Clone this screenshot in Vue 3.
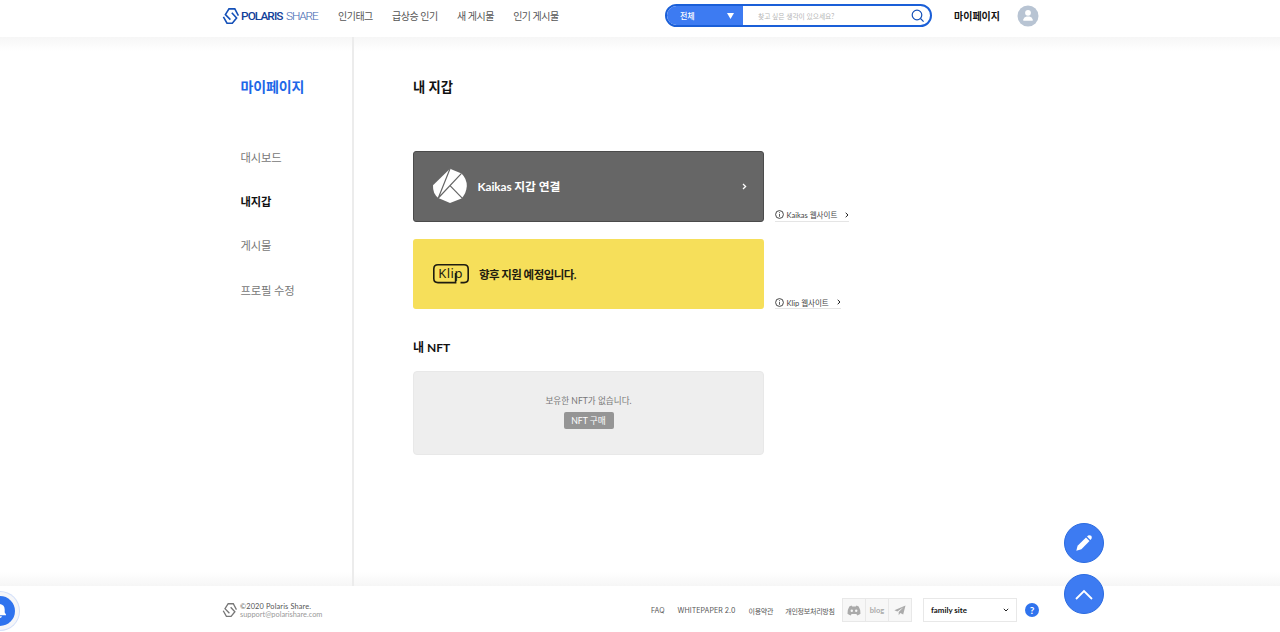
<template>
    <div class="page">
        <header class="header">
            <a class="logo">
                <svg width="18" height="20" viewBox="0 0 18 20" fill="none" stroke="#1450b8" stroke-width="1.6">
                    <path d="M16.4 9.6 L12.8 2.9 H7 L3.4 8.6 L8.4 13.6" />
                    <path d="M1.4 10.8 L5 17.2 H10.3 L14.6 12 L9.8 6.8" />
                </svg>
                <span class="polaris">POLARIS</span>
                <span class="share">SHARE</span>
            </a>
            <nav class="nav">
                <a v-for="item in navItems" :key="item">{{ item }}</a>
            </nav>
            <div class="search">
                <div class="search-type">
                    <span>전체</span>
                    <svg width="7" height="6" viewBox="0 0 7 6"><path d="M0 0 H7 L3.5 6 Z" fill="#fff" /></svg>
                </div>
                <div class="search-input">
                    <span>찾고 싶은 생각이 있으세요?</span>
                    <svg width="14" height="14" viewBox="0 0 14 14" fill="none" stroke="#1450b8" stroke-width="1.2">
                        <circle cx="6" cy="6" r="4.8" />
                        <path d="M9.5 9.5 L12.6 12.6" />
                    </svg>
                </div>
            </div>
            <a class="mypage">마이페이지</a>
            <svg class="avatar" width="22" height="22" viewBox="0 0 22 22">
                <circle cx="11" cy="11" r="10.5" fill="#b8c4d3" />
                <circle cx="11" cy="7.8" r="2.9" fill="#fff" />
                <path d="M6.3 15.8 V14.5 Q6.8 11.8 9.6 11.5 H12.4 Q15.2 11.8 15.7 14.5 V15.8 Z" fill="#fff" />
            </svg>
        </header>

        <div class="body">
            <aside class="sidebar">
                <h2>마이페이지</h2>
                <ul>
                    <li v-for="menu in menus" :key="menu" :class="{ active: menu === current }">{{ menu }}</li>
                </ul>
            </aside>

            <main class="content">
                <h1>내 지갑</h1>
                <div class="row">
                    <div class="wallet kaikas">
                        <svg width="36" height="36" viewBox="0 0 36 36">
                            <path d="M18 .8 L29.5 5.4 Q34.8 10.5 34.8 18 Q34.5 25 29.5 30.4 L18 35 L6.3 30 Q.6 25.5 1 17.2 Z" fill="#fff" />
                            <path d="M18 .8 L6.3 30 L29.5 5.4 M18 17.7 L30.2 30.2" fill="none" stroke="#666" stroke-width="1.2" />
                        </svg>
                        <span class="wallet-name">Kaikas 지갑 연결</span>
                        <svg class="arrow" width="5" height="7" viewBox="0 0 5 7"><path d="M1 1 L3.6 3.5 L1 6" fill="none" stroke="#fff" stroke-width="1.3" /></svg>
                    </div>
                    <a class="site">
                        <svg width="9" height="9" viewBox="0 0 9 9"><circle cx="4.5" cy="4.5" r="3.9" fill="none" stroke="#333" stroke-width=".9" /><path d="M4.5 2.2 V3.2 M4.5 4 V6.8" stroke="#333" stroke-width=".8" /></svg>
                        <span>Kaikas 웹사이트</span>
                        <svg width="4" height="6" viewBox="0 0 4 6"><path d="M.7 .8 L3 3 L.7 5.2" fill="none" stroke="#222" /></svg>
                    </a>
                </div>
                <div class="row">
                    <div class="wallet klip">
                        <svg width="38" height="22" viewBox="0 0 38 22">
                            <path d="M23.6 10 V19.6 H6 Q1.8 19.6 1.8 15.5 V6 Q1.8 1.8 6 1.8 H32 Q36.2 1.8 36.2 6 V15.5 Q36.2 19.6 32 19.6 H28.5" fill="none" stroke="#1e1c10" stroke-width="1.6" />
                            <text x="6.2" y="15" font-size="13" letter-spacing=".5" fill="#1e1c10">Klip</text>
                        </svg>
                        <span class="wallet-name">향후 지원 예정입니다.</span>
                    </div>
                    <a class="site">
                        <svg width="9" height="9" viewBox="0 0 9 9"><circle cx="4.5" cy="4.5" r="3.9" fill="none" stroke="#333" stroke-width=".9" /><path d="M4.5 2.2 V3.2 M4.5 4 V6.8" stroke="#333" stroke-width=".8" /></svg>
                        <span>Klip 웹사이트</span>
                        <svg width="4" height="6" viewBox="0 0 4 6"><path d="M.7 .8 L3 3 L.7 5.2" fill="none" stroke="#222" /></svg>
                    </a>
                </div>
                <h3>내 NFT</h3>
                <div class="nft">
                    <p>보유한 NFT가 없습니다.</p>
                    <button>NFT 구매</button>
                </div>
            </main>
        </div>

        <footer class="footer">
            <svg class="footer-logo" width="15" height="16" viewBox="0 1.5 17 17" fill="none" stroke="#777" stroke-width="1.5">
                <path d="M16.4 9.6 L12.8 2.9 H7 L3.4 8.6 L8.4 13.6" />
                <path d="M1.4 10.8 L5 17.2 H10.3 L14.6 12 L9.8 6.8" />
            </svg>
            <div class="copyright">
                <div class="owner">©2020 Polaris Share.</div>
                <div class="email">support@polarishare.com</div>
            </div>
            <nav class="links">
                <a v-for="link in links" :key="link">{{ link }}</a>
            </nav>
            <div class="social">
                <a>
                    <svg width="14" height="11" viewBox="0 0 14 11">
                        <path d="M4.5 .6 L2.3 1.4 Q.2 4.8 .5 8.8 Q2 10 3.7 10.4 L4.6 9 H9.4 L10.3 10.4 Q12 10 13.5 8.8 Q13.8 4.8 11.7 1.4 L9.5 .6 L8.8 1.6 H5.2 Z" fill="#aaa" />
                        <circle cx="4.8" cy="5.8" r="1.2" fill="#f7f7f7" />
                        <circle cx="9.2" cy="5.8" r="1.2" fill="#f7f7f7" />
                    </svg>
                </a>
                <a>blog</a>
                <a>
                    <svg width="12" height="11" viewBox="0 0 12 11"><path d="M11.5 .5 L.4 5.2 L3.3 6.5 L9.5 2.3 L4.7 7 V10.2 L6.3 8 L9.2 9.5 Z" fill="#aaa" /></svg>
                </a>
            </div>
            <div class="family">
                <span>family site</span>
                <svg width="6" height="4" viewBox="0 0 6 4"><path d="M.8 .8 L3 3 L5.2 .8" fill="none" stroke="#222" /></svg>
            </div>
            <span class="help">?</span>
        </footer>

        <button class="fab write">
            <svg width="18" height="18" viewBox="0 0 18 18" fill="#fff">
                <path d="M11 3.5 L14.5 7 L6.4 15.2 L1.3 16.8 L2.6 11.8 Z" />
                <path d="M12 2.6 Q13.8 .4 16.2 1.8 Q17.7 4 15.4 6 Z" />
            </svg>
        </button>
        <button class="fab top">
            <svg width="18" height="11" viewBox="0 0 18 11"><path d="M1 10 L9 2 L17 10" fill="none" stroke="#fff" stroke-width="1.8" /></svg>
        </button>
        <div class="bell">
            <svg width="14" height="16" viewBox="0 0 14 16" fill="#fff"><path d="M7 1 Q11.7 1.8 11.7 6.5 V9.5 L13 11.5 V12.3 H1 V11.5 L2.3 9.5 V6.5 Q2.3 1.8 7 1 Z M5 13.2 H9 Q8.5 15 7 15 Q5.5 15 5 13.2 Z" /></svg>
        </div>
    </div>
</template>

<script setup>
import { ref } from 'vue';

const navItems = ['인기태그', '급상승 인기', '새 게시물', '인기 게시물'];
const menus = ['대시보드', '내지갑', '게시물', '프로필 수정'];
const links = ['FAQ', 'WHITEPAPER 2.0', '이용약관', '개인정보처리방침'];

const current = ref('내지갑');
</script>

<style>
body {
    margin: 0;
    overflow: hidden;
}
</style>

<style scoped>
.page {
    position: relative;
    display: flex;
    flex-direction: column;
    height: 632px;
    overflow: hidden;
    background: #fff;
    color: #111;
    font-family: Lato, "Noto Sans CJK KR", sans-serif;
}

svg {
    display: block;
    flex-shrink: 0;
}

h1, h2, h3, p, ul {
    margin: 0;
    padding: 0;
}

button {
    border: none;
    padding: 0;
    font-family: inherit;
}

.header {
    display: flex;
    align-items: center;
    height: 31px;
    padding: 0 0 6px 222px;
    white-space: nowrap;
}

.logo {
    display: flex;
    align-items: center;
    width: 116px;
    font-family: Roboto, sans-serif;
    font-size: 11.8px;
}

.polaris {
    width: 45px;
    margin-left: 1px;
    color: #11409a;
    font-weight: 500;
    letter-spacing: -0.9px;
}

.share {
    color: #3c63b0;
    font-weight: 300;
    letter-spacing: -1.1px;
}

.nav {
    display: flex;
    gap: 19.3px;
    width: 327px;
    font-size: 10px;
    letter-spacing: -0.5px;
    color: #555;
}

.search {
    display: flex;
    box-sizing: border-box;
    width: 267px;
    height: 23px;
    border: 2px solid #1a5fd8;
    border-radius: 12px;
    overflow: hidden;
}

.search-type {
    display: flex;
    align-items: center;
    justify-content: space-between;
    box-sizing: border-box;
    width: 76px;
    padding: 0 9px 0 13px;
    background: #3d7bf2;
    color: #fff;
    font-size: 8px;
    font-weight: 500;
}

.search-input {
    display: flex;
    flex: 1;
    align-items: center;
    justify-content: space-between;
    padding: 0 5px 0 15px;
    color: #b5b5b5;
    font-size: 6.8px;
    letter-spacing: -0.05px;
}

.mypage {
    width: 63px;
    margin-left: 22px;
    font-size: 10px;
    font-weight: 700;
}

.body {
    display: flex;
    flex: 1;
    background: linear-gradient(#f6f6f6, #fff 14px, #fff calc(100% - 14px), #f6f6f6);
}

.sidebar {
    box-sizing: border-box;
    width: 354px;
    padding: 40px 0 0 240.5px;
    border-right: 2px solid #ececec;
}

.sidebar h2 {
    height: 20px;
    line-height: 20px;
    font-size: 14px;
    letter-spacing: -0.1px;
    color: #1e67e8;
}

.sidebar ul {
    margin-top: 38.5px;
    list-style: none;
}

.sidebar li {
    height: 44.4px;
    line-height: 44px;
    font-size: 11.3px;
    letter-spacing: -0.15px;
    color: #777;
}

.sidebar li.active {
    color: #111;
    font-weight: 700;
}

.content {
    padding: 40px 0 0 59px;
}

.content h1 {
    height: 20px;
    margin-bottom: 54px;
    line-height: 20px;
    font-size: 13.3px;
}

.row {
    display: flex;
    align-items: flex-end;
    margin-bottom: 17px;
}

.wallet {
    display: flex;
    align-items: center;
    box-sizing: border-box;
    width: 351px;
    height: 70.5px;
    padding: 0 17px 0 19px;
    border-radius: 3px;
}

.kaikas {
    background: #666;
    border: 1px solid #4b4b4b;
    padding: 0 16px 0 18px;
    color: #fff;
}

.klip {
    background: #f6df5a;
    color: #1e1c10;
}

.klip text {
    font-family: "Noto Sans", sans-serif;
}

.wallet-name {
    margin-left: 9px;
    font-size: 11.5px;
    font-weight: 700;
    letter-spacing: -0.55px;
}

.kaikas .wallet-name {
    margin-left: 9.5px;
    padding-bottom: 1px;
    font-size: 11.8px;
    letter-spacing: -0.08px;
}

.arrow {
    margin-left: auto;
}

.site {
    display: flex;
    align-items: center;
    height: 12px;
    margin-left: 11px;
    border-bottom: 1px solid #e5e5e5;
    font-size: 7.5px;
    color: #444;
}

.site span {
    margin: 0 8px 0 2.5px;
}

.content h3 {
    height: 20px;
    margin-top: 29px;
    line-height: 20px;
    font-size: 12px;
}

.nft {
    display: flex;
    flex-direction: column;
    align-items: center;
    box-sizing: border-box;
    width: 351px;
    height: 84px;
    margin-top: 13px;
    padding-top: 22px;
    border: 1px solid #e8e8e8;
    border-radius: 4px;
    background: #eee;
}

.nft p {
    height: 14px;
    line-height: 14px;
    font-size: 8.6px;
    color: #777;
}

.nft button {
    width: 50px;
    height: 17px;
    margin-top: 4px;
    border-radius: 2px;
    background: #959595;
    color: #fff;
    font-size: 8.7px;
    line-height: 17px;
}

.footer {
    display: flex;
    align-items: center;
    box-sizing: border-box;
    height: 46px;
    padding: 2px 0 0 222px;
    background: #fff;
    white-space: nowrap;
}

.copyright {
    width: 411px;
    margin-left: 3px;
    padding-top: 1px;
    font-size: 7.4px;
    line-height: 7.5px;
    color: #555;
}

.owner {
    letter-spacing: 0.13px;
}

.email {
    color: #999;
}

.links {
    display: flex;
    gap: 13px;
    width: 191px;
    padding-top: 1px;
    font-family: Inter, "Noto Sans CJK KR", sans-serif;
    font-size: 7px;
    letter-spacing: 0.05px;
    color: #555;
}

.links a:nth-child(n + 3) {
    margin-right: -1px;
    letter-spacing: -0.25px;
}

.social {
    display: flex;
    box-sizing: border-box;
    width: 70px;
    height: 24px;
    border: 1px solid #e8e8e8;
    background: #f7f7f7;
}

.social a {
    display: flex;
    flex: 1;
    align-items: center;
    justify-content: center;
    font-size: 7.5px;
    font-weight: 700;
    color: #aaa;
}

.social a + a {
    border-left: 1px solid #e8e8e8;
}

.family {
    display: flex;
    align-items: center;
    justify-content: space-between;
    box-sizing: border-box;
    width: 94px;
    height: 24px;
    margin-left: 11px;
    padding: 0 7px;
    border: 1px solid #e8e8e8;
    font-size: 7.9px;
    font-weight: 700;
}

.help {
    width: 14px;
    height: 14px;
    margin-left: 8px;
    border-radius: 50%;
    background: #2f73ee;
    color: #fff;
    font-size: 10px;
    font-weight: 700;
    line-height: 14px;
    text-align: center;
}

.fab {
    position: absolute;
    left: 1064px;
    display: flex;
    align-items: center;
    justify-content: center;
    box-sizing: border-box;
    width: 40px;
    height: 40px;
    border: 1px solid #2b6be0;
    border-radius: 50%;
    background: #3d7bf2;
}

.write {
    top: 523px;
}

.top {
    top: 574px;
}

.bell {
    position: absolute;
    top: 596px;
    left: -15px;
    display: flex;
    align-items: center;
    justify-content: center;
    width: 30px;
    height: 30px;
    border-radius: 50%;
    background: #2f73ee;
    box-shadow: 0 0 0 4px #f5f6f9, 0 0 0 5px #d5e1fa;
}
</style>
